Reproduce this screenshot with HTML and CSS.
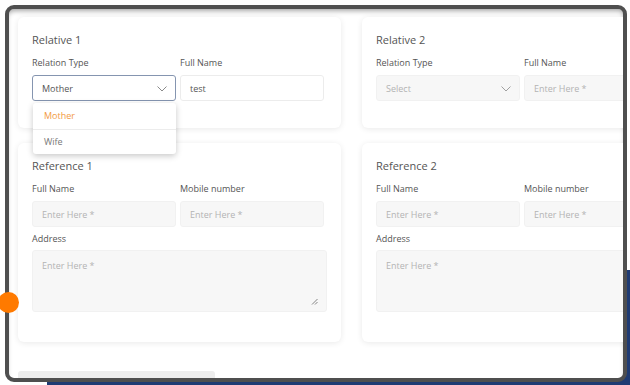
FILE: index.html
```html
<!DOCTYPE html>
<html>
<head>
<meta charset="utf-8">
<link rel="stylesheet" href="styles.css">
</head>
<body>
<div class="backdrop"></div>
<div class="frame">
  <div class="grid">
    <section class="card card-sm">
      <h3 class="title">Relative 1</h3>
      <div class="row">
        <div class="field">
          <label class="label">Relation Type</label>
          <div class="select active">
            <span class="value">Mother</span>
            <svg class="chev" width="10" height="6" viewBox="0 0 10 6"><path d="M0.5 0.5 L5 5 L9.5 0.5" fill="none" stroke="#8a8a8a" stroke-width="1"/></svg>
          </div>
          <ul class="menu">
            <li class="opt sel">Mother</li>
            <li class="opt">Wife</li>
          </ul>
        </div>
        <div class="field">
          <label class="label">Full Name</label>
          <div class="input filled"><span class="value">test</span></div>
        </div>
      </div>
    </section>
    <section class="card card-sm">
      <h3 class="title">Relative 2</h3>
      <div class="row">
        <div class="field">
          <label class="label">Relation Type</label>
          <div class="select">
            <span class="ph">Select</span>
            <svg class="chev" width="10" height="6" viewBox="0 0 10 6"><path d="M0.5 0.5 L5 5 L9.5 0.5" fill="none" stroke="#a0a0a0" stroke-width="1"/></svg>
          </div>
        </div>
        <div class="field">
          <label class="label">Full Name</label>
          <div class="input"><span class="ph">Enter Here *</span></div>
        </div>
      </div>
    </section>
    <section class="card card-lg">
      <h3 class="title">Reference 1</h3>
      <div class="row">
        <div class="field">
          <label class="label">Full Name</label>
          <div class="input"><span class="ph">Enter Here *</span></div>
        </div>
        <div class="field">
          <label class="label">Mobile number</label>
          <div class="input"><span class="ph">Enter Here *</span></div>
        </div>
      </div>
      <label class="label addr">Address</label>
      <div class="textarea">
        <span class="ph">Enter Here *</span>
        <svg class="grip" width="7" height="7" viewBox="0 0 7 7"><path d="M6.5 1 L1 6.5 M6.5 4 L4 6.5" stroke="#777" stroke-width="0.9"/></svg>
      </div>
    </section>
    <section class="card card-lg">
      <h3 class="title">Reference 2</h3>
      <div class="row">
        <div class="field">
          <label class="label">Full Name</label>
          <div class="input"><span class="ph">Enter Here *</span></div>
        </div>
        <div class="field">
          <label class="label">Mobile number</label>
          <div class="input"><span class="ph">Enter Here *</span></div>
        </div>
      </div>
      <label class="label addr">Address</label>
      <div class="textarea"><span class="ph">Enter Here *</span></div>
    </section>
  </div>
  <div class="bar"></div>
</div>
<div class="dot"></div>
</body>
</html>
```
FILE: styles.css
```css
* { box-sizing: border-box; }
html, body { margin: 0; padding: 0; }
body {
  width: 630px;
  height: 385px;
  overflow: hidden;
  background: #fff;
  font-family: "Open Sans", "Noto Sans", sans-serif;
  position: relative;
}
.backdrop {
  position: absolute;
  left: 47px;
  top: 270px;
  right: 0;
  bottom: 0;
  background: #1f3b73;
}
.frame {
  position: relative;
  margin: 5px 0 0 5px;
  width: 622px;
  height: 377px;
  border: 4px solid #4f4f4f;
  border-radius: 9px;
  background: #fff;
  overflow: hidden;
  box-shadow: inset 0 4px 5px -2px rgba(0,0,0,0.35);
}
.grid {
  display: grid;
  grid-template-columns: 323px 323px;
  column-gap: 21px;
  row-gap: 15px;
  padding: 8px 0 0 9px;
}
.card {
  background: #fff;
  border-radius: 6px;
  box-shadow: 0 1px 6px rgba(0,0,0,0.09);
  padding: 15px 14px 0 14px;
}
.card-sm { height: 111px; }
.card-lg { height: 199px; }
.title {
  margin: 0;
  font-size: 11px;
  line-height: 16px;
  font-weight: 400;
  color: #555;
}
.row {
  display: grid;
  grid-template-columns: 144px 144px;
  column-gap: 4px;
  margin-top: 8px;
}
.field { position: relative; }
.label {
  display: block;
  font-size: 9px;
  line-height: 13px;
  color: #555;
  margin-bottom: 6px;
}
.addr { margin-top: 5px; margin-bottom: 5px; }
.input, .select {
  height: 26px;
  border-radius: 3px;
  background: #f7f7f7;
  border: 1px solid #f1f1f1;
  display: flex;
  align-items: center;
  padding: 0 9px;
  font-size: 9px;
}
.input.filled { background: #fff; border-color: #ececec; }
.select { justify-content: space-between; padding-right: 8px; }
.select.active { background: #fff; border-color: #8595b0; }
.value { color: #555; }
.ph { color: #b3b3b3; }
.chev { display: block; margin-top: 1px; }
.menu {
  position: absolute;
  left: 1px;
  top: 47px;
  width: 143px;
  margin: 0;
  padding: 0;
  list-style: none;
  background: #fff;
  border-radius: 3px;
  box-shadow: 0 2px 6px rgba(0,0,0,0.22);
  z-index: 5;
}
.opt {
  height: 25.5px;
  display: flex;
  align-items: center;
  padding-left: 11px;
  font-size: 9px;
  color: #777;
}
.opt + .opt { border-top: 1px solid #ececec; }
.opt.sel { color: #f29a3f; }
.textarea {
  position: relative;
  width: 295px;
  height: 62px;
  border-radius: 3px;
  background: #f7f7f7;
  border: 1px solid #f1f1f1;
  padding: 8px 9px;
  font-size: 9px;
  line-height: 13px;
}
.grip { position: absolute; right: 8px; bottom: 6px; }
.bar {
  margin: 29px 0 0 9px;
  width: 197px;
  height: 14px;
  background: #ededed;
  border-radius: 3px;
}
.dot {
  position: absolute;
  left: -2px;
  top: 292px;
  width: 21px;
  height: 21px;
  border-radius: 50%;
  background: #ff7a00;
}
```
